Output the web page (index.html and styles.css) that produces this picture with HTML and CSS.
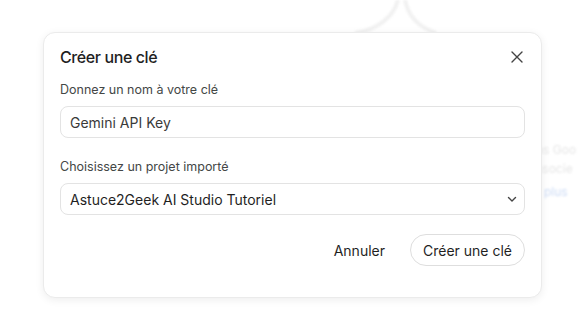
FILE: index.html
```html
<!DOCTYPE html>
<html lang="fr">
<head>
<meta charset="utf-8">
<link rel="stylesheet" href="styles.css">
</head>
<body>
<div class="backdrop">
  <svg class="bg-curve" width="160" height="40" viewBox="0 0 160 40">
    <path d="M55 33 C78 30 94 16 98 0 M105 0 C108 16 118 27 136 33" fill="none" stroke="#f1f1f1" stroke-width="4"/>
  </svg>
  <div class="bg-text">
    <span>ns Goo</span>
    <span>ssocie</span>
    <span class="bg-link">r plus</span>
  </div>
</div>
<div class="modal">
  <div class="header">
    <h1 class="title">Créer une clé</h1>
    <button class="close" aria-label="Fermer">
      <svg width="14" height="14" viewBox="0 0 14 14"><path d="M2 2 L12 12 M12 2 L2 12" stroke="#444" stroke-width="1.4" stroke-linecap="round"/></svg>
    </button>
  </div>
  <label class="label">Donnez un nom à votre clé</label>
  <div class="field">Gemini API Key</div>
  <label class="label label2">Choisissez un projet importé</label>
  <div class="field select">
    <span class="select-text">Astuce2Geek AI Studio Tutoriel</span>
    <svg width="12" height="12" viewBox="0 0 12 12"><path d="M2.5 4.5 L6 8 L9.5 4.5" fill="none" stroke="#444" stroke-width="1.4" stroke-linecap="round" stroke-linejoin="round"/></svg>
  </div>
  <div class="actions">
    <button class="btn btn-text">Annuler</button>
    <button class="btn btn-outline">Créer une clé</button>
  </div>
</div>
</body>
</html>
```
FILE: styles.css
```css
* { box-sizing: border-box; }
html, body { margin: 0; padding: 0; }
body {
  width: 580px;
  height: 315px;
  background: #ffffff;
  font-family: Inter, "Noto Sans", sans-serif;
  position: relative;
  overflow: hidden;
  padding-top: 32px;
  padding-left: 43px;
}
.backdrop {
  position: absolute;
  inset: 0;
  z-index: 0;
}
.bg-curve {
  position: absolute;
  left: 300px;
  top: 0;
  filter: blur(1px);
}
.bg-text {
  position: absolute;
  left: 536px;
  top: 142px;
  display: flex;
  flex-direction: column;
  gap: 4px;
  font-size: 12px;
  line-height: 15px;
  color: #e6e6e6;
  filter: blur(1px);
}
.bg-text .bg-link { color: #cddcf5; margin-top: 4px; }
.modal {
  position: relative;
  z-index: 1;
  width: 499px;
  height: 266px;
  background: #fff;
  border: 1px solid #ebebeb;
  border-radius: 12px;
  box-shadow: 0 2px 8px rgba(0,0,0,0.07);
  padding: 12px 16px 0 16px;
  display: flex;
  flex-direction: column;
}
.header {
  display: flex;
  align-items: center;
  justify-content: space-between;
  height: 24px;
}
.title {
  margin: 0;
  font-size: 16px;
  font-weight: 500;
  color: #1f1f1f;
  letter-spacing: -0.4px;
}
.close {
  border: 0;
  background: none;
  padding: 0;
  width: 14px;
  height: 14px;
  margin-right: 1px;
  display: flex;
}
.label {
  margin-top: 12px;
  font-size: 12.5px;
  line-height: 18px;
  color: #444746;
}
.label2 { margin-top: 20px; }
.field {
  margin-top: 7px;
  height: 32px;
  border: 1px solid #e3e3e3;
  border-radius: 8px;
  padding: 0 9px;
  display: flex;
  align-items: center;
  font-size: 14px;
  color: #3a3a3a;
}
.select {
  justify-content: space-between;
  color: #1f1f1f;
  padding-right: 6px;
}
.actions {
  margin-top: 19px;
  display: flex;
  justify-content: flex-end;
  align-items: center;
  gap: 25px;
}
.btn {
  font-family: inherit;
  font-size: 14px;
  color: #1f1f1f;
  background: #fff;
  cursor: pointer;
}
.btn-text {
  border: 0;
  padding: 0;
}
.btn-outline {
  height: 32px;
  border: 1px solid #dedede;
  border-radius: 16px;
  padding: 0 12px;
}
```
